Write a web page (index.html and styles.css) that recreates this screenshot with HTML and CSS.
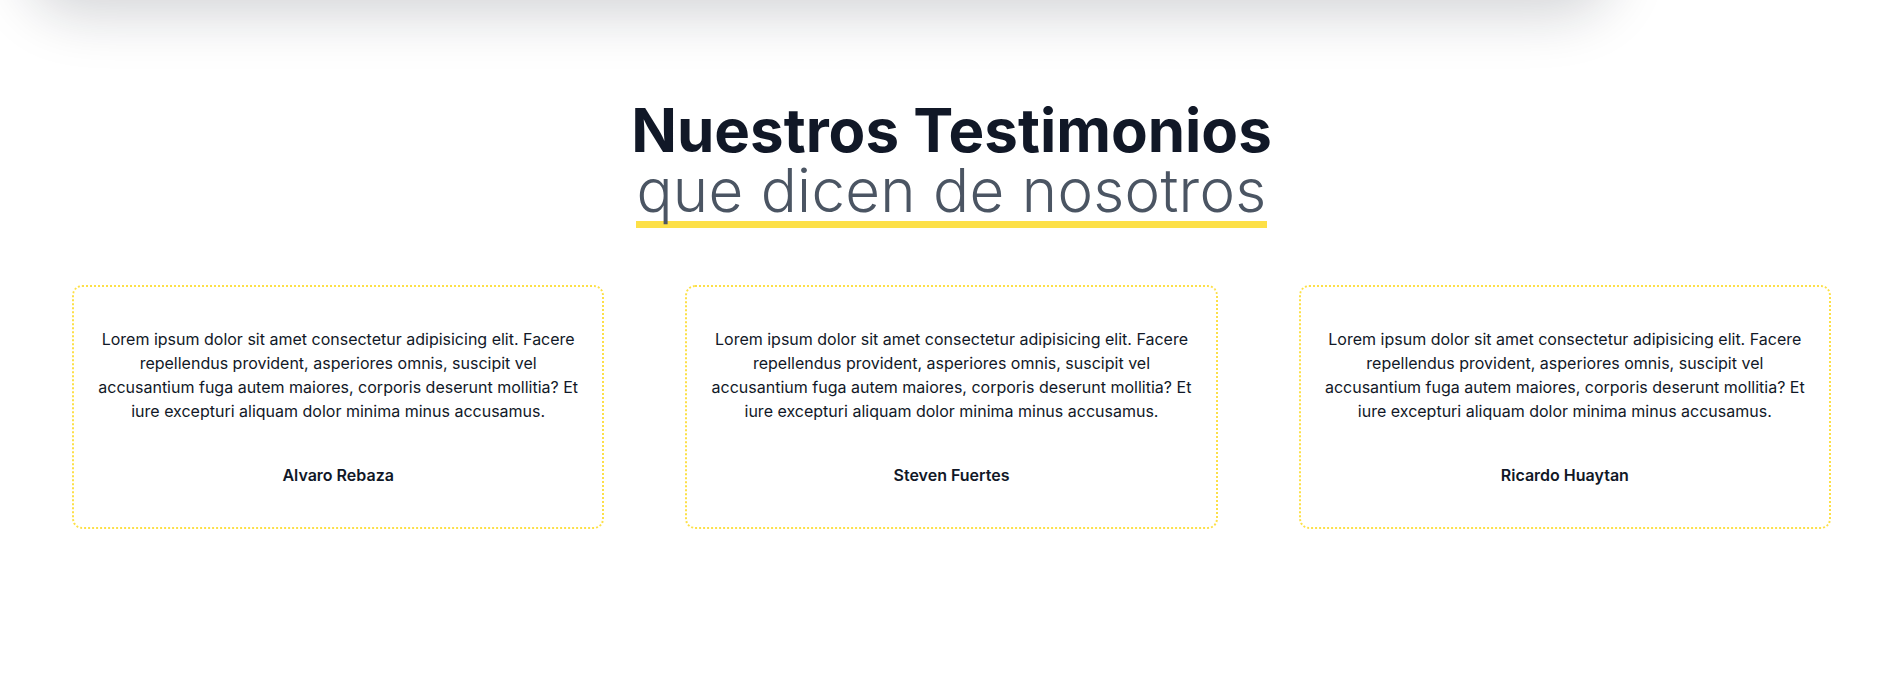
FILE: index.html
```html
<!DOCTYPE html>
<html lang="es">
<head>
<meta charset="utf-8">
<title>Testimonios</title>
<link rel="stylesheet" href="styles.css">
</head>
<body>
<div class="topbar-shadow"></div>
<section class="testimonials">
  <h2 class="heading">
    <span class="heading-main">Nuestros Testimonios</span>
    <span class="heading-sub">que dicen de nosotros</span>
  </h2>
  <div class="cards">
    <article class="card">
      <p class="card-text">Lorem ipsum dolor sit amet consectetur adipisicing elit. Facere repellendus provident, asperiores omnis, suscipit vel accusantium fuga autem maiores, corporis deserunt mollitia? Et iure excepturi aliquam dolor minima minus accusamus.</p>
      <p class="card-name">Alvaro Rebaza</p>
    </article>
    <article class="card">
      <p class="card-text">Lorem ipsum dolor sit amet consectetur adipisicing elit. Facere repellendus provident, asperiores omnis, suscipit vel accusantium fuga autem maiores, corporis deserunt mollitia? Et iure excepturi aliquam dolor minima minus accusamus.</p>
      <p class="card-name">Steven Fuertes</p>
    </article>
    <article class="card">
      <p class="card-text">Lorem ipsum dolor sit amet consectetur adipisicing elit. Facere repellendus provident, asperiores omnis, suscipit vel accusantium fuga autem maiores, corporis deserunt mollitia? Et iure excepturi aliquam dolor minima minus accusamus.</p>
      <p class="card-name">Ricardo Huaytan</p>
    </article>
  </div>
</section>
</body>
</html>
```
FILE: styles.css
```css
* { box-sizing: border-box; }
html, body {
  margin: 0;
  padding: 0;
  background: #ffffff;
  font-family: Inter, "Noto Sans", sans-serif;
  color: #111827;
  overflow: hidden;
}
body { position: relative; height: 680px; }

.topbar-shadow {
  position: absolute;
  top: -120px;
  left: 20px;
  width: 1600px;
  height: 120px;
  border-radius: 60px;
  background: #fff;
  box-shadow: 0 20px 55px -5px rgba(17, 24, 39, 0.18);
}

.testimonials {
  padding: 100px 72px 0;
}

.heading {
  margin: 0;
  display: flex;
  flex-direction: column;
  align-items: center;
  text-align: center;
}
.heading-main {
  font-size: 60px;
  font-weight: 700;
  line-height: 1;
  color: #111827;
}
.heading-sub {
  font-size: 60px;
  font-weight: 300;
  line-height: 1;
  letter-spacing: 0.3px;
  padding-bottom: 1px;
  color: #4b5563;
  border-bottom: 7px solid #fde047;
}

.cards {
  margin-top: 57px;
  display: grid;
  grid-template-columns: repeat(3, 1fr);
  gap: 81px;
}
.card {
  border: 2px dotted #fde047;
  border-radius: 10px;
  padding: 40px 20px;
  text-align: center;
  display: flex;
  flex-direction: column;
  gap: 40px;
}
.card-text {
  margin: 0;
  font-size: 16px;
  line-height: 24px;
  color: #111827;
}
.card-name {
  margin: 0;
  font-size: 16px;
  line-height: 24px;
  font-weight: 600;
  color: #111827;
}
```
